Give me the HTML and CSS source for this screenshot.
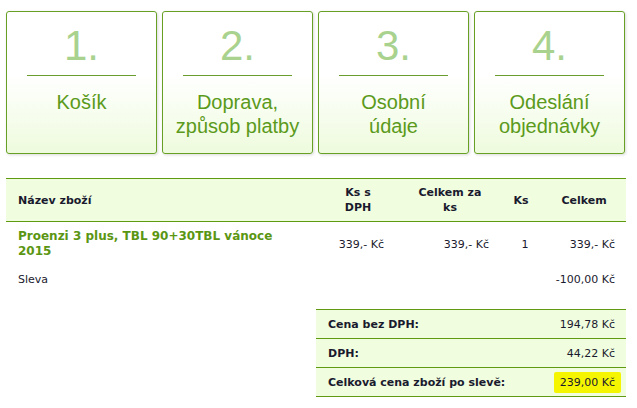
FILE: index.html
```html
<!DOCTYPE html>
<html>
<head>
    <title>Objednávka</title>
    <link rel="stylesheet" href="styles.css">
</head>
<body>
    <div class="steps">
        <div class="step">
            <div class="step-num">1.</div>
            <div class="step-line"></div>
            <div class="step-name">Košík</div>
        </div>
        <div class="step">
            <div class="step-num">2.</div>
            <div class="step-line"></div>
            <div class="step-name">Doprava,<br>způsob platby</div>
        </div>
        <div class="step">
            <div class="step-num">3.</div>
            <div class="step-line"></div>
            <div class="step-name">Osobní<br>údaje</div>
        </div>
        <div class="step">
            <div class="step-num">4.</div>
            <div class="step-line"></div>
            <div class="step-name">Odeslání<br>objednávky</div>
        </div>
    </div>

    <table class="cart">
        <thead>
            <tr>
                <th class="col-name">Název zboží</th>
                <th class="col-price">Ks s<br>DPH</th>
                <th class="col-unit">Celkem za<br>ks</th>
                <th class="col-qty">Ks</th>
                <th class="col-total">Celkem</th>
            </tr>
        </thead>
        <tbody>
            <tr class="item">
                <td class="product">Proenzi 3 plus, TBL 90+30TBL vánoce<br>2015</td>
                <td class="num price">339,- Kč</td>
                <td class="num">339,- Kč</td>
                <td class="qty">1</td>
                <td class="num">339,- Kč</td>
            </tr>
            <tr class="discount">
                <td class="label">Sleva</td>
                <td></td>
                <td></td>
                <td></td>
                <td class="num">-100,00 Kč</td>
            </tr>
        </tbody>
    </table>

    <table class="summary">
        <tr>
            <th>Cena bez DPH:</th>
            <td>194,78 Kč</td>
        </tr>
        <tr>
            <th>DPH:</th>
            <td>44,22 Kč</td>
        </tr>
        <tr>
            <th>Celková cena zboží po slevě:</th>
            <td><span class="highlight">239,00 Kč</span></td>
        </tr>
    </table>
</body>
</html>
```

FILE: styles.css
```css
body {
    margin: 0;
    padding: 11px 6px 0 6px;
    background: #fff;
    font-family: "DejaVu Sans", Verdana, sans-serif;
    font-size: 11px;
    color: #1a1a2e;
}
.steps {
    display: flex;
    gap: 5px;
    width: 619px;
}
.step {
    width: 151px;
    height: 143px;
    box-sizing: border-box;
    border: 1px solid #68a026;
    border-radius: 3px;
    background: linear-gradient(to bottom, #fff 0%, #fff 45%, #eefbdd 100%);
    box-shadow: 1px 1px 3px rgba(0, 0, 0, 0.15);
    text-align: center;
    font-family: "Liberation Sans", Arial, sans-serif;
    padding-top: 10px;
}
.step-num {
    font-size: 42px;
    line-height: 48px;
    color: #a9d28e;
}
.step-line {
    width: 109px;
    height: 1px;
    margin: 5px auto 0;
    background: #6a9e2c;
}
.step-name {
    margin-top: 14px;
    font-size: 20px;
    line-height: 24px;
    color: #5b9a1b;
}
table {
    border-collapse: collapse;
}
.cart {
    width: 620px;
    margin-top: 24px;
}
.cart thead th {
    background: #f0fddf;
    border-top: 1px solid #5f9a12;
    border-bottom: 1px solid #5f9a12;
    height: 42px;
    padding: 0;
    font-weight: bold;
    line-height: 15px;
    text-align: center;
}
.cart th.col-name {
    text-align: left;
    padding-left: 12px;
}
.col-name { width: 298px; }
.col-price { width: 84px; }
.col-unit { width: 100px; }
.col-qty { width: 42px; }
.col-total { width: 84px; }
.cart td {
    padding: 0;
}
.item td {
    height: 44px;
    vertical-align: middle;
}
.cart .product {
    padding-left: 12px;
    font-weight: bold;
    font-size: 12px;
    line-height: 15px;
    color: #5b9613;
}
.cart .num {
    text-align: right;
    padding-right: 11px;
}
.cart .price {
    padding-right: 16px;
}
.cart .qty {
    text-align: center;
    padding-left: 8px;
}
.discount td {
    height: 29px;
    vertical-align: top;
    padding-top: 7px;
}
.cart .label {
    padding-left: 12px;
}
.summary {
    width: 310px;
    margin-left: 310px;
    margin-top: 7px;
}
.summary tr {
    background: #f0fddf;
    border-top: 1px solid #5f9a12;
    border-bottom: 1px solid #5f9a12;
}
.summary th,
.summary td {
    height: 28px;
    padding: 0;
}
.summary th {
    text-align: left;
    padding-left: 12px;
    font-weight: bold;
}
.summary td {
    text-align: right;
    padding-right: 11px;
}
.highlight {
    display: inline-block;
    background: #f5f500;
    border-radius: 2px;
    padding: 4px 6px;
    margin-right: -6px;
}
```
